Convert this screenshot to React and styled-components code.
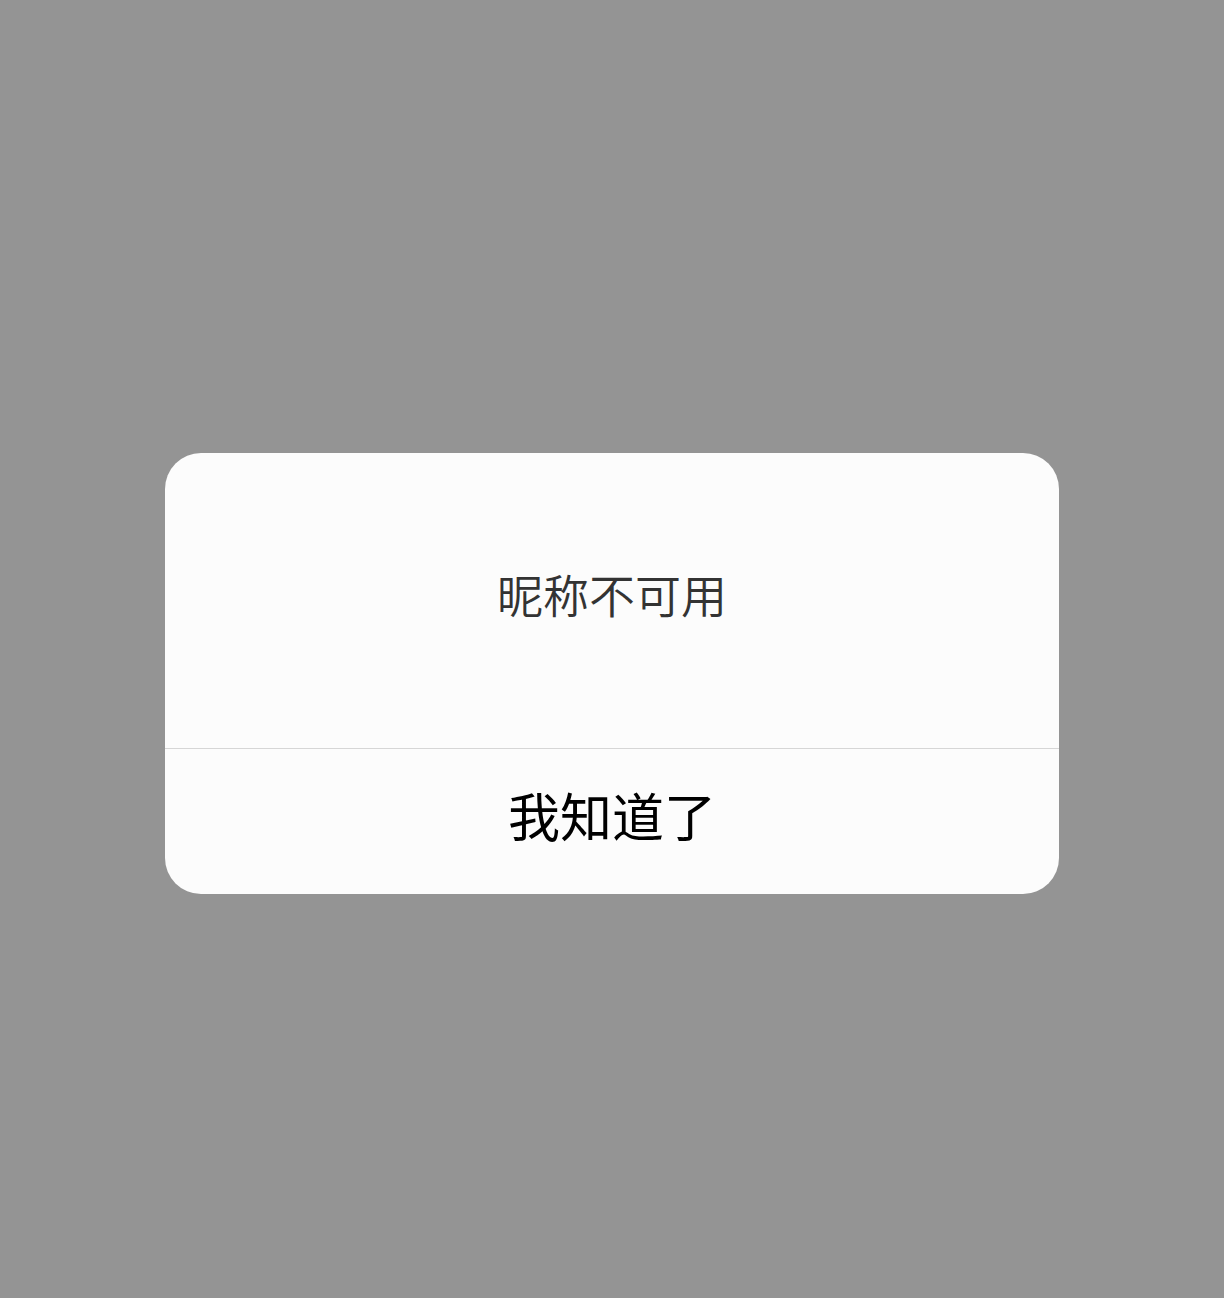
import React from "react";
import styled, { createGlobalStyle } from "styled-components";

const Global = createGlobalStyle`
  html, body {
    margin: 0;
    padding: 0;
  }
  body {
    font-family: "Noto Sans CJK SC", "Noto Sans", sans-serif;
  }
`;

const Overlay = styled.div`
  width: 1224px;
  height: 1298px;
  background: #949494;
  display: flex;
  justify-content: center;
  padding-top: 453px;
  box-sizing: border-box;
`;

const Dialog = styled.div`
  width: 894px;
  height: 441px;
  background: #fcfcfc;
  border-radius: 36px;
  overflow: hidden;
  display: flex;
  flex-direction: column;
`;

const Body = styled.div`
  height: 296px;
  box-sizing: border-box;
  padding-bottom: 16px;
  display: flex;
  align-items: center;
  justify-content: center;
  border-bottom: 1px solid #d6d6d6;
`;

const Message = styled.p`
  margin: 0;
  font-size: 46px;
  font-weight: 350;
  color: #333333;
`;

const Action = styled.button`
  flex: 1;
  border: none;
  background: none;
  font-family: inherit;
  font-size: 52px;
  font-weight: 400;
  color: #000000;
  display: flex;
  align-items: center;
  justify-content: center;
  padding: 0 0 14px;
  cursor: pointer;
`;

const App = () => {
  return (
    <>
      <Global />
      <Overlay>
        <Dialog>
          <Body>
            <Message>昵称不可用</Message>
          </Body>
          <Action>我知道了</Action>
        </Dialog>
      </Overlay>
    </>
  );
};

export default App;
